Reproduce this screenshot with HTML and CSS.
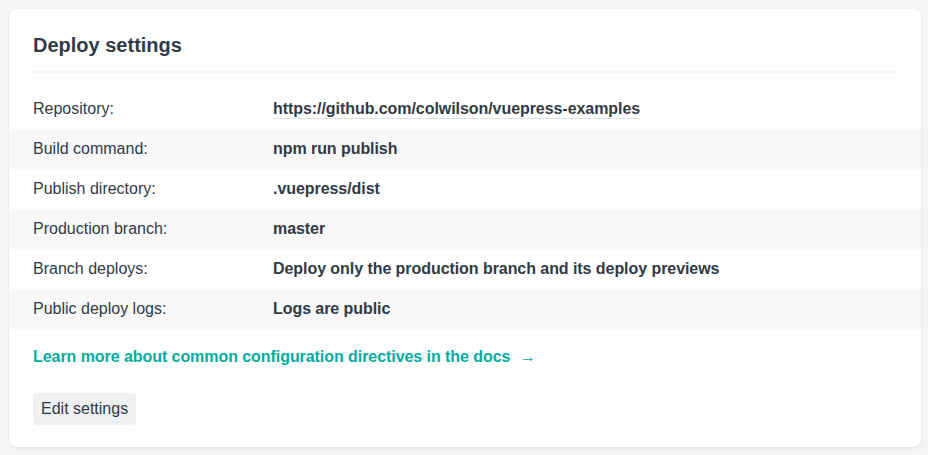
FILE: index.html
```html
<!DOCTYPE html>
<html>
<head>
<meta charset="utf-8">
<link rel="stylesheet" href="styles.css">
</head>
<body>
<section class="card">
  <header class="card-header">
    <h2 class="card-title">Deploy settings</h2>
  </header>
  <dl class="settings">
    <div class="row">
      <dt class="label">Repository:</dt>
      <dd class="value"><a class="repo-link" href="#">https://github.com/colwilson/vuepress-examples</a></dd>
    </div>
    <div class="row">
      <dt class="label">Build command:</dt>
      <dd class="value">npm run publish</dd>
    </div>
    <div class="row">
      <dt class="label">Publish directory:</dt>
      <dd class="value">.vuepress/dist</dd>
    </div>
    <div class="row">
      <dt class="label">Production branch:</dt>
      <dd class="value">master</dd>
    </div>
    <div class="row">
      <dt class="label">Branch deploys:</dt>
      <dd class="value">Deploy only the production branch and its deploy previews</dd>
    </div>
    <div class="row">
      <dt class="label">Public deploy logs:</dt>
      <dd class="value">Logs are public</dd>
    </div>
  </dl>
  <p class="docs"><a class="docs-link" href="#">Learn more about common configuration directives in the docs <span class="arrow">→</span></a></p>
  <div class="actions">
    <button class="btn">Edit settings</button>
  </div>
</section>
</body>
</html>
```

FILE: styles.css
```css
html, body {
  margin: 0;
  padding: 0;
}
body {
  background: #f3f5f6;
  font-family: "Liberation Sans", Arial, sans-serif;
  color: #313b46;
  padding: 9px 7px 8px 9px;
}
.card {
  background: #ffffff;
  border-radius: 8px;
  box-shadow: 0 1px 3px rgba(20, 30, 40, 0.10);
  padding: 24px 0 22px;
}
.card-header {
  margin: 0 24px;
  padding-bottom: 14px;
  border-bottom: 2px solid #f3f4f5;
}
.card-title {
  margin: 0;
  font-size: 20px;
  line-height: 24px;
  font-weight: 700;
  color: #313b46;
}
.settings {
  margin: 16px 0 0;
  padding: 0;
}
.row {
  display: flex;
  align-items: center;
  height: 40px;
  padding: 0 24px;
  font-size: 16px;
  line-height: 20px;
}
.row:nth-child(even) {
  background: #f8f8f8;
}
.label {
  width: 240px;
  flex: none;
  margin: 0;
}
.value {
  margin: 0;
  font-weight: 700;
  letter-spacing: -0.06px;
}
.repo-link {
  color: inherit;
  text-decoration: none;
  border-bottom: 1px solid #dde1e4;
  padding-bottom: 1px;
}
.docs {
  margin: 18px 24px 0;
  font-size: 16px;
  line-height: 20px;
}
.docs-link {
  color: #00ad9f;
  font-weight: 700;
  text-decoration: none;
  letter-spacing: -0.06px;
}
.arrow {
  margin-left: 5px;
  font-weight: 400;
}
.actions {
  margin: 26px 24px 0;
}
.btn {
  font-family: "Liberation Sans", Arial, sans-serif;
  font-size: 16px;
  height: 32px;
  padding: 0 8px;
  border: 0;
  border-radius: 4px;
  background: #eff0f1;
  color: #313b46;
}
```
